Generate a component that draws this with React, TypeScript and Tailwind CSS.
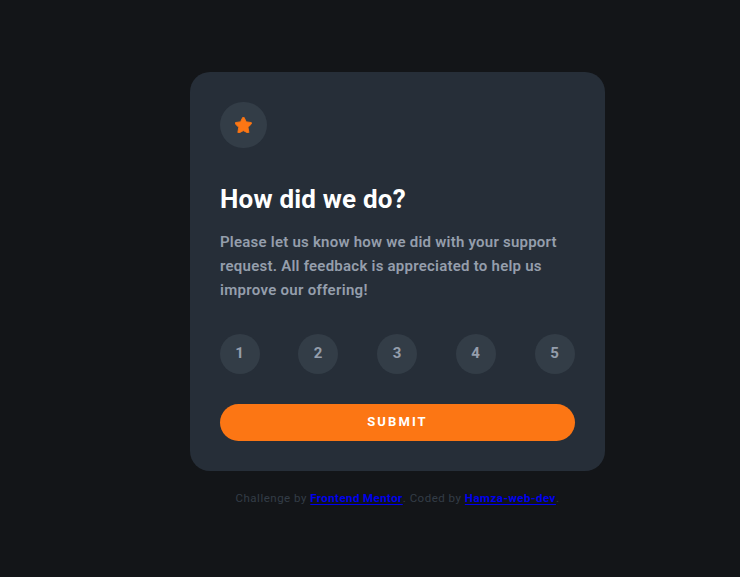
const ratings = [1, 2, 3, 4, 5];

function Star() {
  return (
    <svg width="17" height="16" viewBox="0 0 17 16" aria-hidden="true">
      <path
        d="m9.067.43 1.99 4.031c.112.228.33.386.58.422l4.45.647a.772.772 0 0 1 .427 1.316l-3.22 3.138a.773.773 0 0 0-.222.683l.76 4.431a.772.772 0 0 1-1.12.813l-3.98-2.092a.773.773 0 0 0-.718 0l-3.98 2.092a.772.772 0 0 1-1.119-.813l.76-4.431a.77.77 0 0 0-.222-.683L.233 6.846A.772.772 0 0 1 .661 5.53l4.449-.647a.772.772 0 0 0 .58-.422L7.68.43a.774.774 0 0 1 1.387 0Z"
        fill="#fc7614"
        stroke="#fc7614"
        strokeWidth="0.9"
        strokeLinejoin="round"
      />
    </svg>
  );
}

export default function App() {
  return (
    <div className="flex h-[577px] flex-col overflow-hidden bg-[#131518] pl-[190px] pt-[72px] font-['Roboto',sans-serif]">
      <main className="flex h-[399px] w-[415px] flex-col rounded-[20px] bg-[#262e38] p-[30px]">
        <div className="flex h-[46px] w-[47px] shrink-0 items-center justify-center rounded-full bg-[#333d47]">
          <Star />
        </div>
        <h1 className="mt-[35px] h-8 whitespace-nowrap text-[26px] font-bold leading-8 tracking-[0.2px] text-white">
          How did we do?
        </h1>
        <p className="mt-[15px] whitespace-nowrap text-[15px] font-semibold leading-6 text-[#959eac]">
          <span className="block tracking-[0.23px]">Please let us know how we did with your support</span>
          <span className="block tracking-[0.24px]">request. All feedback is appreciated to help us</span>
          <span className="block tracking-[0.3px]">improve our offering!</span>
        </p>
        <div className="mt-8 flex gap-[39px]">
          {ratings.map((n) => (
            <button
              key={n}
              className="flex size-10 items-center justify-center rounded-full bg-[#333d47] pb-0.5 pr-px text-[15px] font-bold text-[#959eac] first:-mr-px nth-2:pr-0 nth-3:pr-0"
            >
              {n}
            </button>
          ))}
        </div>
        <button className="mt-[30px] h-[37px] w-full shrink-0 rounded-[20px] bg-[#fc7614] pb-0.5 text-[13px] font-bold tracking-[2.1px] text-white">
          SUBMIT
        </button>
      </main>
      <footer className="mt-[19px] w-[415px] whitespace-nowrap text-center text-[11.5px] leading-4 tracking-[0.5px] text-[#333d47]">
        Challenge by <a className="font-bold tracking-[0.42px] text-[#0000ee] underline underline-offset-2 [text-decoration-skip-ink:none]">Frontend Mentor</a>. Coded by{" "}
        <a className="font-bold tracking-[0.48px] text-[#0000ee] underline underline-offset-2 [text-decoration-skip-ink:none]">Hamza-web-dev</a>.
      </footer>
    </div>
  );
}
